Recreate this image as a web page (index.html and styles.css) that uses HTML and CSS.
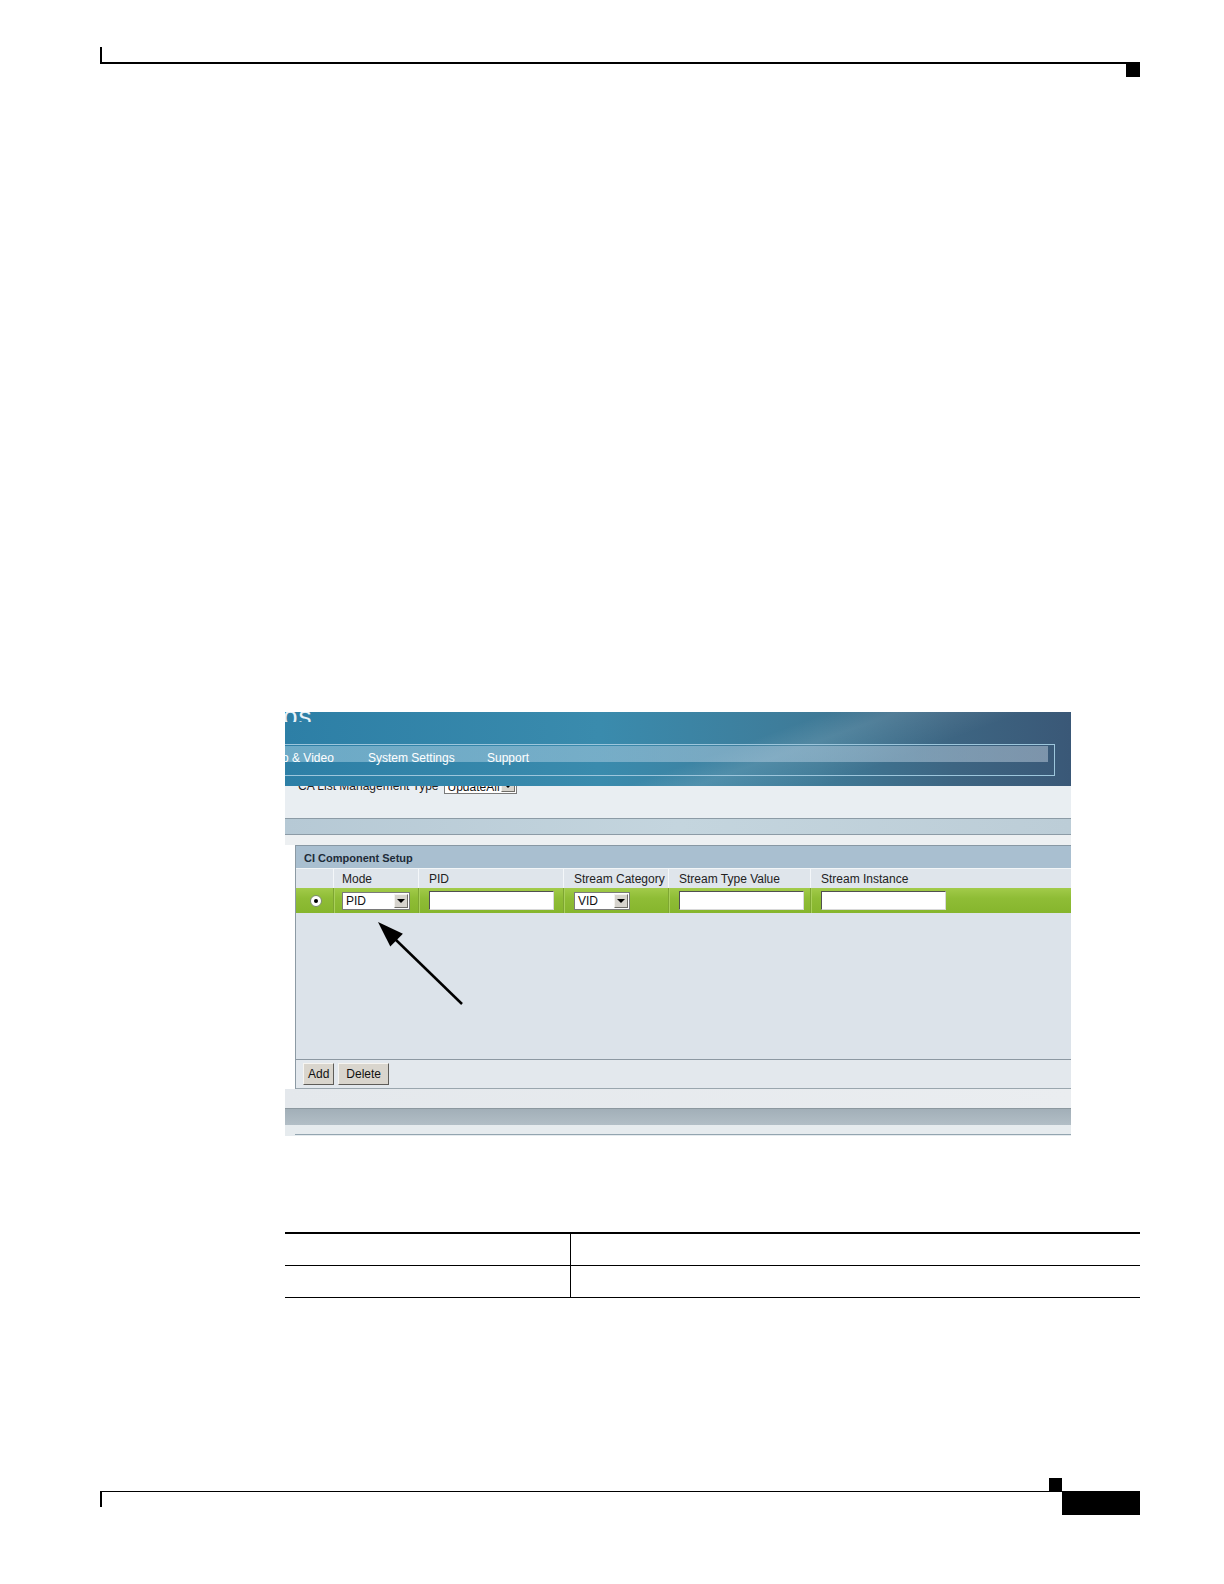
FILE: index.html
```html
<!DOCTYPE html>
<html>
<head>
<meta charset="utf-8">
<link rel="stylesheet" href="styles.css">
</head>
<body>
<div class="page">
  <div class="hdr"></div>
  <div class="hdr-sq"></div>

  <div class="shot">
    <div class="banner">
      <div class="logo">os</div>
      <div class="nav">
        <div class="nav-band"></div>
        <div class="nav-items">
          <span class="nav-item w1">Audio &amp; Video</span>
          <span class="nav-item w2">System Settings</span>
          <span class="nav-item">Support</span>
        </div>
      </div>
    </div>
    <div class="calist">
      <div class="calist-row">
        <span class="calist-label">CA List Management Type</span>
        <span class="sel sel-ua"><span class="sel-val">UpdateAll</span><span class="sel-btn"><span class="tri"></span></span></span>
      </div>
    </div>
    <div class="band"></div>
    <div class="gap"></div>
    <div class="panel">
      <div class="panel-title">CI Component Setup</div>
      <div class="grid heads">
        <div class="cell c0"></div>
        <div class="cell c1">Mode</div>
        <div class="cell c2">PID</div>
        <div class="cell c3">Stream Category</div>
        <div class="cell c4">Stream Type Value</div>
        <div class="cell c5">Stream Instance</div>
      </div>
      <div class="grid green">
        <div class="cell c0"><span class="radio"><span class="dot"></span></span></div>
        <div class="cell c1"><span class="sel sel-pid"><span class="sel-val">PID</span><span class="sel-btn"><span class="tri"></span></span></span></div>
        <div class="cell c2"><span class="inp"></span></div>
        <div class="cell c3"><span class="sel sel-vid"><span class="sel-val">VID</span><span class="sel-btn"><span class="tri"></span></span></span></div>
        <div class="cell c4"><span class="inp"></span></div>
        <div class="cell c5"><span class="inp"></span></div>
      </div>
      <div class="empty"></div>
      <div class="btnbar">
        <span class="btn">Add</span>
        <span class="btn">Delete</span>
      </div>
    </div>
    <div class="after"></div>
    <div class="band2"></div>
    <div class="tail"><div class="tail-line"></div></div>

    <svg class="arrow" width="200" height="120" viewBox="0 0 200 120">
      <line x1="110" y1="27" x2="177" y2="92" stroke="#000" stroke-width="2.5"/>
      <polygon points="93,10 105.3,34.6 117.9,21.8" fill="#000"/>
    </svg>
  </div>

  <table class="tbl">
    <tr><td class="tc1"></td><td class="tc2"></td></tr>
    <tr><td class="tc1"></td><td class="tc2"></td></tr>
  </table>

  <div class="ftr">
    <div class="ftr-left">
      <div class="ftr-sq"></div>
      <div class="ftr-rule"></div>
    </div>
    <div class="ftr-block"></div>
  </div>
</div>
</body>
</html>
```

FILE: styles.css
```css
html, body {
  margin: 0;
  padding: 0;
  background: #fff;
  width: 1224px;
  height: 1584px;
  overflow: hidden;
}
body {
  font-family: "Liberation Sans", Arial, sans-serif;
}
.page {
  width: 1224px;
  height: 1584px;
  display: flex;
  flex-direction: column;
  overflow: hidden;
}

/* header */
.hdr {
  margin: 47px 0 0 100px;
  width: 1038px;
  height: 15px;
  border-left: 2px solid #000;
  border-bottom: 2px solid #000;
  flex: none;
}
.hdr-sq {
  margin-left: 1126px;
  width: 14px;
  height: 13px;
  background: #000;
  flex: none;
}

/* screenshot */
.shot {
  position: relative;
  margin: 635px 0 0 285px;
  width: 786px;
  height: 424px;
  flex: none;
  display: flex;
  flex-direction: column;
  overflow: hidden;
  font-size: 12px;
  color: #222;
}
.banner {
  height: 74px;
  flex: none;
  display: flex;
  flex-direction: column;
  background:
    linear-gradient(160deg, rgba(255,255,255,0) 55%, rgba(255,255,255,0.10) 62%, rgba(255,255,255,0) 75%),
    linear-gradient(to right, #2d7fa6 0%, #3a8bad 40%, #3f7a97 68%, #3d6582 85%, #3a5877 100%);
  overflow: hidden;
}
.logo {
  height: 10px;
  color: #e8f2f8;
  font-size: 26px;
  line-height: 12px;
  margin-left: -2px;
  letter-spacing: 1px;
  overflow: hidden;
  display: flex;
  align-items: flex-end;
  flex: none;
}
.nav {
  position: relative;
  margin-top: 22px;
  width: 769px;
  height: 30px;
  border: 1px solid #9dc6dc;
  border-left: none;
  overflow: hidden;
  flex: none;
}
.nav-band {
  margin-top: 1px;
  height: 16px;
  background: linear-gradient(to right, rgba(160,205,225,0.55), rgba(170,200,220,0.55) 60%, rgba(190,205,220,0.5));
  margin-right: 6px;
}
.nav-items {
  position: absolute;
  left: -27px;
  top: 6px;
  display: flex;
  color: #fff;
  font-size: 12px;
  white-space: nowrap;
}
.nav-item { display: block; }
.w1 { width: 110px; }
.w2 { width: 119px; }

.calist {
  height: 32px;
  flex: none;
  background: #e9eef2;
  overflow: hidden;
}
.calist-row {
  margin-top: -8px;
  height: 16px;
  display: flex;
  align-items: center;
  padding-left: 13px;
  gap: 5px;
  font-size: 12px;
  color: #222;
}
.sel {
  display: inline-flex;
  align-items: stretch;
  background: #fff;
  border: 1px solid #7a7a7a;
  box-sizing: border-box;
  height: 18px;
}
.sel-ua { width: 73px; height: 16px; }
.sel-val {
  flex: 1;
  padding-left: 3px;
  line-height: 16px;
  font-size: 12px;
  color: #111;
  overflow: hidden;
}
.sel-btn {
  width: 14px;
  margin: 1px;
  background: #d6d3cc;
  border: 1px solid;
  border-color: #f4f2ee #6f6d68 #6f6d68 #f4f2ee;
  box-sizing: border-box;
  display: flex;
  align-items: center;
  justify-content: center;
}
.tri {
  width: 0;
  height: 0;
  border-left: 4px solid transparent;
  border-right: 4px solid transparent;
  border-top: 4px solid #000;
}

.band {
  height: 15px;
  flex: none;
  border-top: 1px solid #8c9ba6;
  border-bottom: 1px solid #8c9ba6;
  background: linear-gradient(to right, #b6c9d5, #c4d5de 50%, #bccdd7);
}
.gap {
  height: 10px;
  flex: none;
  background: #edf0f2;
}

.panel {
  margin-left: 10px;
  flex: none;
  display: flex;
  flex-direction: column;
  border-left: 1px solid #8c9aa4;
  background: #dce3ea;
}
.panel-title {
  height: 22px;
  border-top: 1px solid #8898a4;
  background: #a9bfd0;
  font-weight: bold;
  font-size: 11px;
  color: #1d2b38;
  line-height: 24px;
  padding-left: 8px;
}
.grid {
  display: grid;
  grid-template-columns: 37px 85px 145px 105px 142px 1fr;
}
.heads {
  height: 20px;
  background: #dfe5eb;
  border-top: 1px solid #f2f5f7;
  box-sizing: border-box;
}
.heads .cell {
  line-height: 20px;
  padding-left: 8px;
  border-left: 1px solid #f4f7f9;
  font-size: 12px;
  color: #222;
  white-space: nowrap;
}
.heads .c0 { border-left: none; }
.heads .c2, .heads .c3, .heads .c4, .heads .c5 { padding-left: 10px; }
.green {
  height: 25px;
  background: linear-gradient(to bottom, #a2cb4a, #8fbd36 40%, #86b52d);
}
.green .cell {
  display: flex;
  align-items: center;
  padding-left: 8px;
  border-left: 1px solid #7ea632;
  box-shadow: inset 1px 0 0 #a9d05a;
}
.green .c0 {
  border-left: none;
  box-shadow: none;
  justify-content: center;
  padding-left: 0;
}
.green .c2, .green .c3, .green .c4, .green .c5 { padding-left: 10px; }
.radio {
  width: 10px;
  height: 10px;
  border-radius: 50%;
  background: #fff;
  border: 1px solid #7a8a6a;
  display: flex;
  align-items: center;
  justify-content: center;
  margin-left: 2px;
}
.dot {
  width: 4px;
  height: 4px;
  border-radius: 50%;
  background: #000;
}
.sel-pid { width: 68px; }
.sel-vid { width: 56px; }
.inp {
  display: block;
  width: 125px;
  height: 19px;
  box-sizing: border-box;
  background: #fff;
  border: 1px solid;
  border-color: #505050 #d8d8d8 #d8d8d8 #505050;
}
.empty {
  height: 146px;
  background: #dce3ea;
  border-bottom: 1px solid #8c98a2;
}
.btnbar {
  height: 28px;
  background: #e3e8ed;
  border-bottom: 1px solid #9aa6ae;
  display: flex;
  align-items: center;
  padding-left: 7px;
  gap: 4px;
}
.btn {
  height: 22px;
  box-sizing: border-box;
  padding: 0 7px;
  background: #d9d5cd;
  border: 1px solid;
  border-color: #f6f4f0 #5e5c58 #5e5c58 #f6f4f0;
  font-size: 12px;
  line-height: 20px;
  color: #111;
}
.btn:first-child { padding: 0 4px; }
.after {
  height: 19px;
  flex: none;
  background: linear-gradient(to right, #e4e8ec, #eaedf0);
}
.band2 {
  height: 16px;
  flex: none;
  border-top: 1px solid #8c989f;
  background: linear-gradient(to bottom, #a2afb8, #b2bec6);
}
.tail {
  height: 11px;
  flex: none;
  background: #e6ebee;
  display: flex;
  flex-direction: column;
  justify-content: flex-end;
}
.tail-line {
  margin-left: 10px;
  margin-bottom: 1px;
  height: 1px;
  background: #93a5b0;
}
.arrow {
  position: absolute;
  left: 0;
  top: 200px;
}

/* table */
.tbl {
  margin: 96px 0 0 285px;
  width: 855px;
  border-collapse: collapse;
  flex: none;
}
.tbl tr:first-child td { border-top: 2px solid #000; }
.tbl td {
  height: 31px;
  padding: 0;
  border-bottom: 1px solid #000;
}
.tc1 {
  width: 285px;
  border-right: 1px solid #000;
}

/* footer */
.ftr {
  margin: 180px 0 0 100px;
  width: 1040px;
  display: flex;
  align-items: flex-start;
  flex: none;
}
.ftr-left {
  flex: 1;
  display: flex;
  flex-direction: column;
}
.ftr-sq {
  align-self: flex-end;
  width: 13px;
  height: 13px;
  background: #000;
}
.ftr-rule {
  height: 15px;
  border-top: 1px solid #000;
  border-left: 2px solid #000;
}
.ftr-block {
  width: 78px;
  height: 24px;
  margin-top: 13px;
  background: #000;
}
```
